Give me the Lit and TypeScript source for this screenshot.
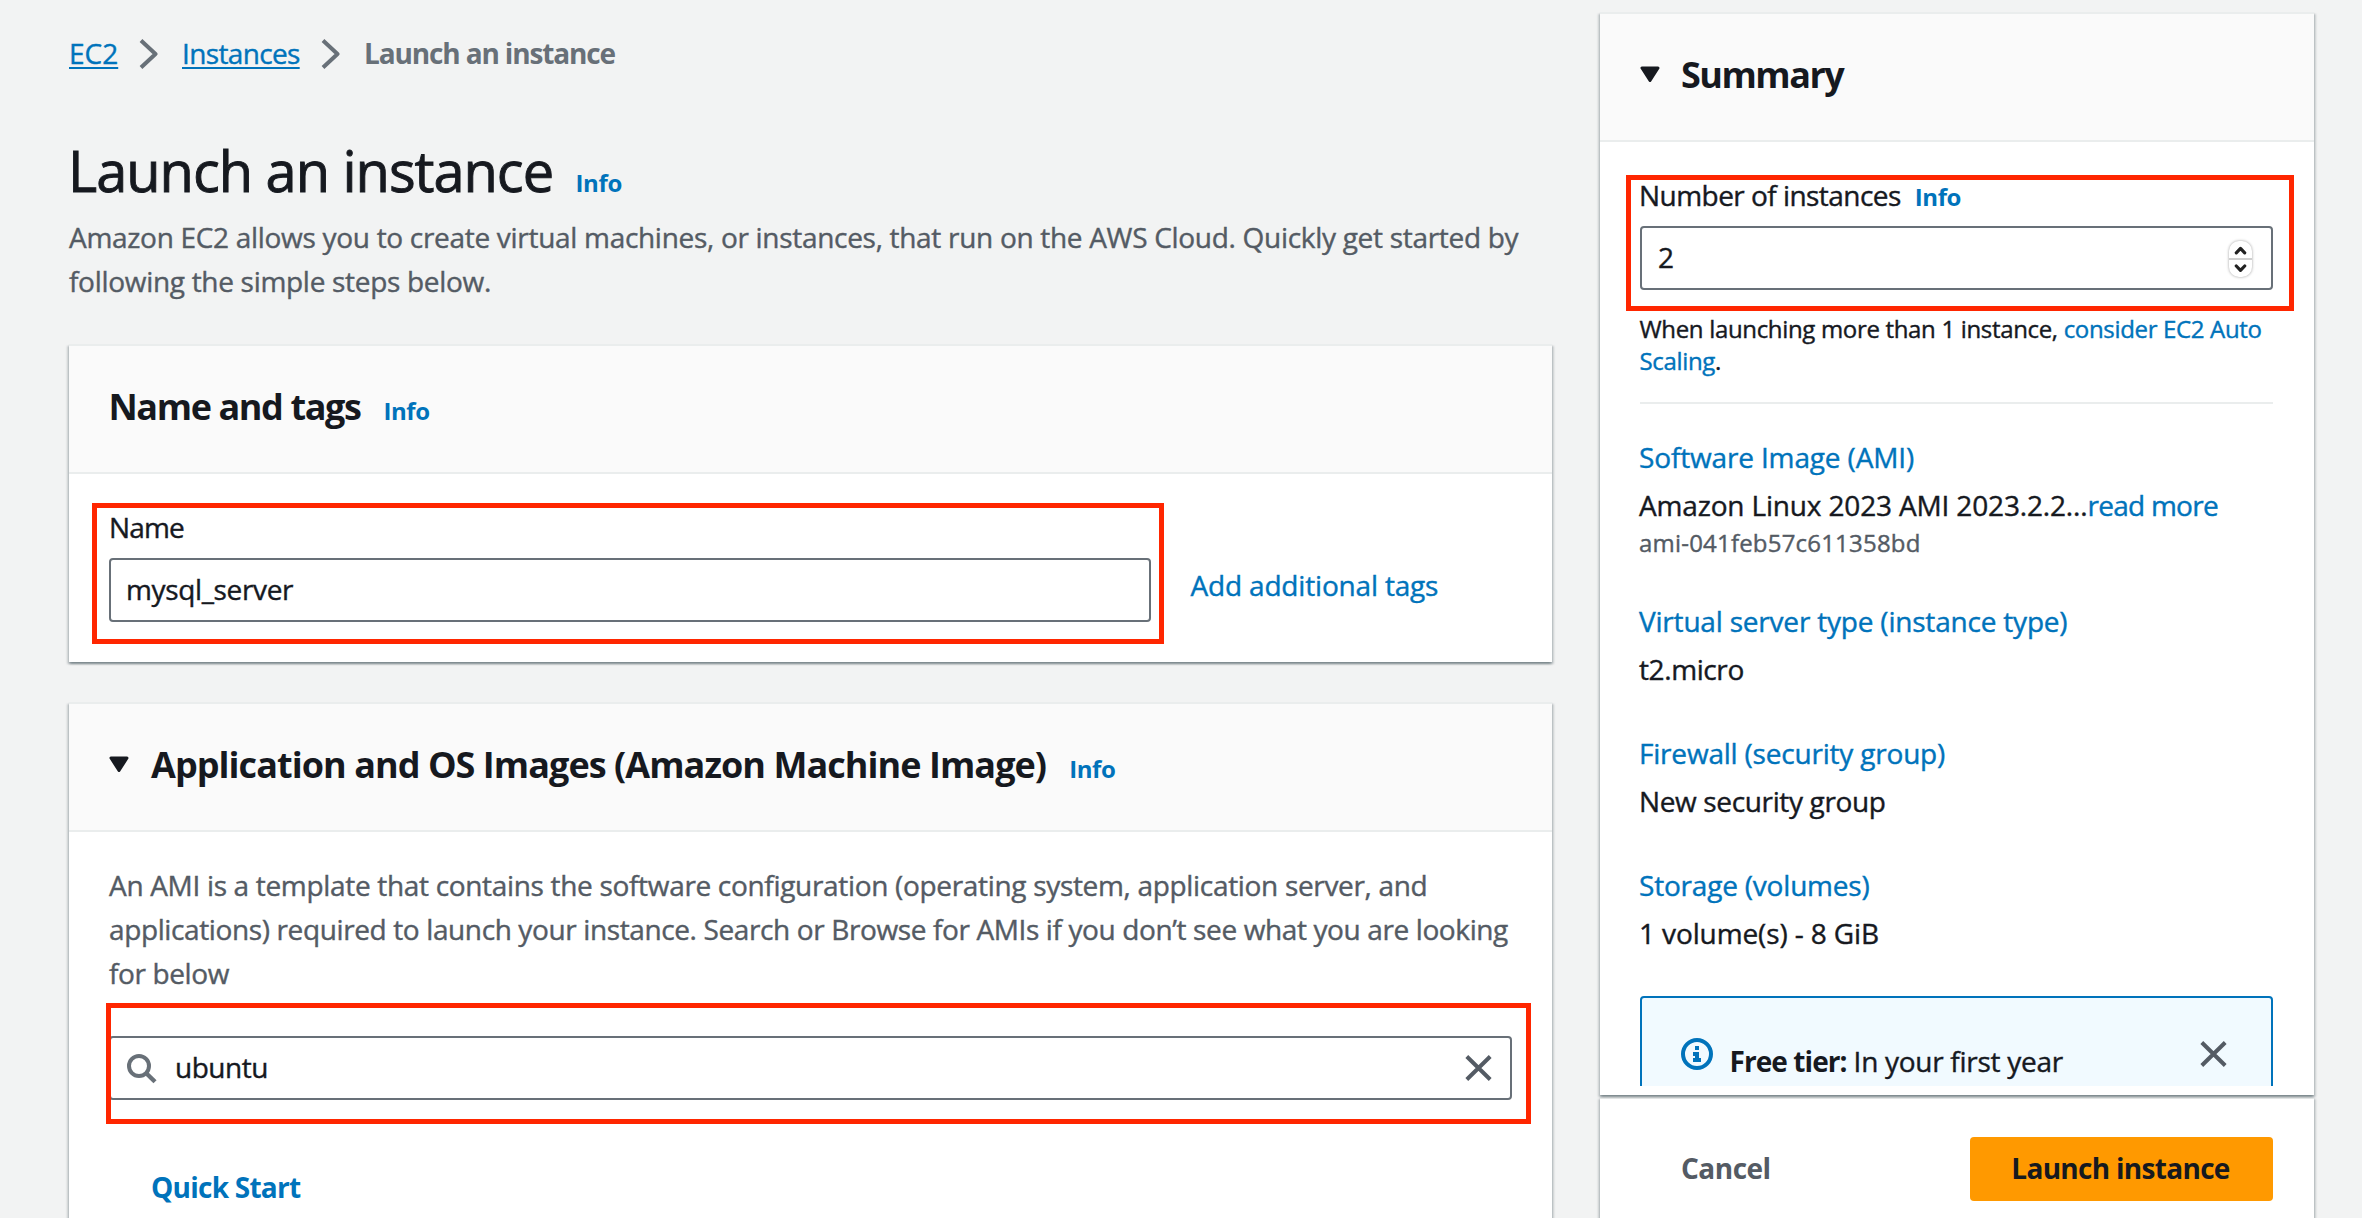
import { LitElement, html, svg, css } from "lit";
import { customElement } from "lit/decorators.js";

const chevron = html`<svg class="chevron" width="19" height="30" viewBox="0 0 19 30"><path d="M2 1.5 L16.5 15 L2 28.5" fill="none" stroke="#687078" stroke-width="4" stroke-linejoin="round"></path></svg>`;
const caret = html`<svg class="caret" width="20" height="16" viewBox="0 0 20 16"><path d="M2 2 H18 L10 14.5 Z" fill="#16191f" stroke="#16191f" stroke-width="3" stroke-linejoin="round"></path></svg>`;
const close = html`<svg class="close" width="27" height="26" viewBox="0 0 27 26"><path d="M1.8 1.5 L25.2 24.5 M25.2 1.5 L1.8 24.5" fill="none" stroke="#545b64" stroke-width="4"></path></svg>`;
const search = html`<svg class="search-icon" width="30" height="30" viewBox="0 0 30 30"><circle cx="12" cy="12" r="10" fill="none" stroke="#687078" stroke-width="4"></circle><path d="M19 19 L28 27.8" stroke="#687078" stroke-width="4.4"></path></svg>`;
const infoIcon = html`<svg class="info-icon" width="32" height="32" viewBox="0 0 32 32"><circle cx="16" cy="16" r="14" fill="none" stroke="#0073bb" stroke-width="4"></circle>${svg`<path d="M14 8h4v4h-4z M12 14h6v6h2v4h-8v-4h2v-2h-2z" fill="#0073bb"></path>`}</svg>`;

@customElement("app-root")
export class AppRoot extends LitElement {
  static styles = css`
    :host {
      display: block;
      font-family: "Open Sans", "Noto Sans", sans-serif;
      font-size: 28px;
      line-height: 44px;
      color: #16191f;
      white-space: nowrap;
      -webkit-text-stroke: 0.4px currentColor;
    }
    * { box-sizing: border-box; }
    svg { display: block; flex: none; }
    h1, h2, p, dl, dt, dd { margin: 0; font-weight: 400; }
    a, .link, .muted, dt { -webkit-text-stroke-color: currentColor; }
    .page {
      width: 2362px;
      height: 1218px;
      overflow: hidden;
      background: #f2f3f3;
      display: flex;
      align-items: flex-start;
      gap: 48px;
      padding-left: 69px;
    }
    .main { width: 1483px; padding-top: 31px; flex: none; }
    .crumbs { display: flex; align-items: center; height: 44px; }
    .crumbs a { color: #0073bb; text-decoration: underline; text-decoration-thickness: 2px; text-underline-offset: 3px; text-decoration-skip-ink: none; }
    .crumb-ec2 { width: 48px; }
    .crumb-inst { letter-spacing: -0.65px; width: 117px; }
    .chevron { margin: 2px 24px 0 22px; }
    .current { font-weight: 700; color: #687078; letter-spacing: -1.14px; -webkit-text-stroke-width: 0; }
    .title-row { display: flex; align-items: baseline; margin-top: 61px; height: 68px; }
    h1 { font-size: 56px; line-height: 68px; letter-spacing: -1.03px; margin-left: -1px; -webkit-text-stroke-width: 0.9px; }
    .info { font-size: 24px; font-weight: 700; color: #0073bb; letter-spacing: -0.4px; line-height: 32px; -webkit-text-stroke-width: 0; }
    h1 + .info { margin-left: 22.5px; }
    .muted { color: #545b64; }
    .lead { margin-top: 11px; letter-spacing: -0.3px; }
    .card {
      background: #fff;
      border-top: 2px solid #eaeded;
      box-shadow: 0 2px 2px 0 rgba(0, 28, 36, 0.3), 2px 2px 2px 0 rgba(0, 28, 36, 0.15), -2px 2px 2px 0 rgba(0, 28, 36, 0.15);
    }
    .head {
      height: 128px;
      padding: 39px 40px 0;
      background: #fafafa;
      border-bottom: 2px solid #eaeded;
      display: flex;
      align-items: baseline;
    }
    h2 { font-size: 36px; font-weight: 700; -webkit-text-stroke-width: 0; }
    h2 + .info { margin-left: 23px; }
    .head .caret { margin-right: 22px; align-self: flex-start; margin-top: 13px; }
    .t-name { letter-spacing: -1.4px; margin-left: -0.5px; }
    .t-app { letter-spacing: -0.95px; }
    .t-sum { letter-spacing: -1.5px; margin-left: -1px; }
    .name-card { margin-top: 41px; }
    .name-body { display: flex; padding: 31px 40px 40px; gap: 39.5px; }
    .field { position: relative; }
    .name-field { width: 1042px; }
    .label { letter-spacing: -0.85px; display: flex; align-items: baseline; height: 44px; }
    .label-num { letter-spacing: -0.54px; margin-left: -1px; }
    .label-num .info { margin-left: 14px; }
    .input {
      height: 64px;
      border: 2px solid #687078;
      border-radius: 4px;
      background: #fff;
      display: flex;
      padding: 7px 19.5px 0 15px;
    }
    .label + .input { margin-top: 9px; }
    .v-name { letter-spacing: -0.36px; }
    .mark { position: absolute; border: 5px solid #ff2600; pointer-events: none; }
    .mark-name { left: -17px; top: -2px; width: 1072px; height: 141px; }
    .mark-search { left: -3px; top: -33px; width: 1425px; height: 121px; }
    .mark-num { left: -14px; top: 2px; width: 668px; height: 136px; }
    .link { color: #0073bb; }
    .add { margin-top: 58px; letter-spacing: -0.18px; }
    .ami-card { margin-top: 40px; height: 600px; }
    .ami-body { padding: 31px 40px 0; }
    .l1 { letter-spacing: -0.32px; }
    .l2 { letter-spacing: -0.38px; }
    .search { margin-top: 41px; }
    .search .input { padding-left: 16px; padding-right: 18px; }
    .search-icon { margin-top: 9px; }
    .v-search { letter-spacing: -0.5px; margin-left: 18px; margin-right: auto; }
    .search .close { margin-top: 10px; }
    .quick { margin: 65px 0 0 42px; font-weight: 700; letter-spacing: -0.75px; color: #0073bb; -webkit-text-stroke-width: 0; }

    .side { width: 714px; padding-top: 12px; flex: none; }
    .summary { height: 1083px; padding-bottom: 9px; position: relative; z-index: 1; }
    .scroll { height: 1072px; overflow: hidden; }
    .sum-body { padding: 31px 41px 0 40px; }
    .v-num { margin-right: auto; margin-left: 1px; }
    .stepper {
      width: 23px; height: 36px; margin-top: 6px; border-radius: 10px; background: #fff;
      box-shadow: 0 0 3px rgba(0, 0, 0, 0.38);
    }
    .help { font-size: 24px; line-height: 32px; margin-top: 23px; letter-spacing: -0.33px; margin-left: -0.5px; }
    .rule { height: 2px; background: #eaeded; margin: 25px 0 31px; }
    dl { display: flex; flex-direction: column; gap: 42px; margin-left: -1px; }
    dt { color: #0073bb; letter-spacing: -0.2px; }
    dd { line-height: 40px; margin-top: 6px; letter-spacing: -0.12px; }
    .k-ami { letter-spacing: -0.15px; }
    .v-linux { letter-spacing: -0.16px; }
    .v-more { letter-spacing: -0.73px; }
    .v-type { letter-spacing: -0.4px; }
    .v-sg { letter-spacing: -0.36px; }
    dd.ami-id { font-size: 24px; line-height: 32px; height: 30px; margin-top: 2px; letter-spacing: 0.2px; }
    .alert {
      margin-top: 43px; height: 160px; border: 2px solid #0073bb; border-radius: 4px; background: #f1faff;
      display: flex; align-items: flex-start; padding: 40px 44.5px 0 39px;
    }
    .alert-text { margin: 1px auto 0 16.5px; letter-spacing: -0.28px; }
    .alert-text b { letter-spacing: -0.93px; -webkit-text-stroke-width: 0; }
    .alert .close { margin-top: 3px; }
    .footer { margin-top: 2px; height: 180px; padding: 38px 41px 0 81px; display: flex; justify-content: space-between; }
    .cancel, .launch { font-weight: 700; line-height: 62px; height: 64px; -webkit-text-stroke-width: 0; }
    .cancel { color: #545b64; letter-spacing: -0.5px; }
    .launch { width: 303px; text-align: center; background: #ff9900; border-radius: 4px; letter-spacing: -0.7px; padding-right: 2px; }
  `;

  render() {
    return html`
      <div class="page">
        <main class="main">
          <nav class="crumbs">
            <a class="crumb-ec2">EC2</a>${chevron}<a class="crumb-inst">Instances</a>${chevron}<span class="current">Launch an instance</span>
          </nav>
          <div class="title-row"><h1>Launch an instance</h1><a class="info">Info</a></div>
          <p class="lead muted">Amazon EC2 allows you to create virtual machines, or instances, that run on the AWS Cloud. Quickly get started by<br />following the simple steps below.</p>

          <section class="card name-card">
            <header class="head"><h2 class="t-name">Name and tags</h2><a class="info">Info</a></header>
            <div class="name-body">
              <div class="field name-field">
                <div class="label">Name</div>
                <div class="input"><span class="v-name">mysql_server</span></div>
                <div class="mark mark-name"></div>
              </div>
              <a class="link add">Add additional tags</a>
            </div>
          </section>

          <section class="card ami-card">
            <header class="head">${caret}<h2 class="t-app">Application and OS Images (Amazon Machine Image)</h2><a class="info">Info</a></header>
            <div class="ami-body">
              <p class="muted"><span class="l1">An AMI is a template that contains the software configuration (operating system, application server, and</span><br /><span class="l2">applications) required to launch your instance. Search or Browse for AMIs if you don’t see what you are looking</span><br /><span class="l2">for below</span></p>
              <div class="field search">
                <div class="input">${search}<span class="v-search">ubuntu</span>${close}</div>
                <div class="mark mark-search"></div>
              </div>
              <div class="quick">Quick Start</div>
            </div>
          </section>
        </main>

        <aside class="side">
          <section class="card summary">
            <div class="scroll">
              <header class="head">${caret}<h2 class="t-sum">Summary</h2></header>
              <div class="sum-body">
                <div class="field">
                  <div class="label label-num">Number of instances<a class="info">Info</a></div>
                  <div class="input">
                    <span class="v-num">2</span>
                    <svg class="stepper" viewBox="0 0 23 36">
                      <path d="M0 18H23" stroke="#cfcfcf" stroke-width="2"></path>
                      <path d="M7.3 11.8 L11.5 7.4 L15.7 11.8 M7.3 25 L11.5 29.4 L15.7 25" fill="none" stroke="#222" stroke-width="3.2" stroke-linecap="round" stroke-linejoin="round"></path>
                    </svg>
                  </div>
                  <div class="mark mark-num"></div>
                </div>
                <p class="help">When launching more than 1 instance, <a class="link">consider EC2 Auto<br />Scaling</a>.</p>
                <div class="rule"></div>
                <dl>
                  <div><dt class="k-ami">Software Image (AMI)</dt><dd class="v-linux">Amazon Linux 2023 AMI 2023.2.2...<a class="link v-more">read more</a></dd><dd class="ami-id muted">ami-041feb57c611358bd</dd></div>
                  <div><dt>Virtual server type (instance type)</dt><dd class="v-type">t2.micro</dd></div>
                  <div><dt>Firewall (security group)</dt><dd class="v-sg">New security group</dd></div>
                  <div><dt>Storage (volumes)</dt><dd>1 volume(s) - 8 GiB</dd></div>
                </dl>
                <div class="alert">${infoIcon}<div class="alert-text"><b>Free tier:</b> In your first year</div>${close}</div>
              </div>
            </div>
          </section>
          <footer class="card footer">
            <div class="cancel">Cancel</div>
            <div class="launch">Launch instance</div>
          </footer>
        </aside>
      </div>
    `;
  }
}
